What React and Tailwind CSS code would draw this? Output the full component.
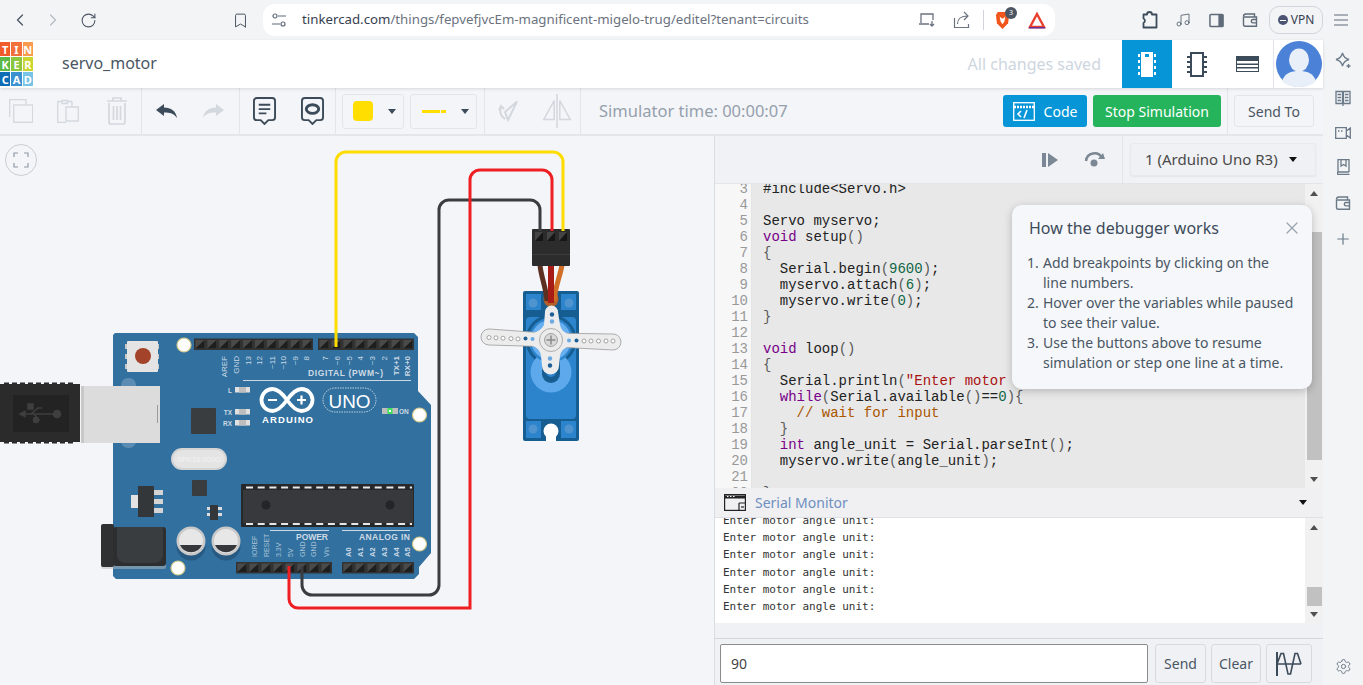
import React from "react";
import { ChevronLeft, ChevronRight, RotateCw, Bookmark, Music, Plus, Settings, X } from "lucide-react";

const sans = "font-['Noto_Sans',sans-serif]";

function Logo() {
  const cells = [
    ["T", "#f15a29"], ["I", "#f4703a"], ["N", "#f89b4f"],
    ["K", "#5cb947"], ["E", "#8dc63f"], ["R", "#cbd52f"],
    ["C", "#0f6db5"], ["A", "#3b90d0"], ["D", "#78c4e6"],
  ];
  return (
    <div className="w-[33px] h-[44px] grid grid-cols-3 gap-[1px] mt-[2px] shrink-0 overflow-hidden">
      {cells.map(([l, c], i) => (
        <div key={i} className="flex items-center justify-center text-white text-[11px] font-bold leading-none" style={{ background: c }}>{l}</div>
      ))}
    </div>
  );
}

function WalletIcon({ className, color = "#5f6b78" }) {
  return (
    <svg width="16" height="16" viewBox="0 0 16 16" fill="none" stroke={color} strokeWidth="1.4" className={className}>
      <path d="M1.500 4.500a2.500 2.500 0 012.500-2.500h8.500v3" />
      <path d="M1.500 4.500V12.500a1.800 1.800 0 001.800 1.800H14.500V5H2" />
      <path d="M14.500 7.500h-3.500a1.700 1.700 0 000 3.400h3.500" />
    </svg>
  );
}

function BrowserBar() {
  return (
    <div className={`h-10 bg-[#f3f4f6] flex items-center shrink-0 ${sans}`}>
      <div className="flex items-center w-[263px] shrink-0 pl-[10px]">
        <ChevronLeft size={20} strokeWidth={1.5} className="text-[#4b5563] shrink-0" />
        <ChevronRight size={20} strokeWidth={1.5} className="text-[#b6bcc5] ml-[13px] shrink-0" />
        <RotateCw size={17} strokeWidth={1.5} className="text-[#4b5563] ml-[17px] shrink-0" />
        <Bookmark size={17} strokeWidth={1.4} className="text-[#4b5563] ml-[135px] shrink-0" />
      </div>
      <div className="w-[792px] h-8 bg-white rounded-[12px] flex items-center pl-[9px] pr-[9px] shrink-0">
        <svg width="14" height="14" viewBox="0 0 14 14" fill="none" stroke="#5f6b78" strokeWidth="1.200" className="shrink-0"><circle cx="3" cy="3" r="2" /><path d="M6 3h8M0 11h8" /><circle cx="11" cy="11" r="2" /></svg>
        <span className="ml-[16px] pb-px text-[13.250px] leading-none text-[#6b7280] whitespace-nowrap"><span className="text-[#374151]">tinkercad.com</span>/things/fepvefjvcEm-magnificent-migelo-trug/editel?tenant=circuits</span>
        <div className="ml-auto flex items-center">
          <svg width="18" height="16" viewBox="0 0 18 16" fill="none" stroke="#6b7280" strokeWidth="1.300"><path d="M3 11V2h12v6M1 12h10M14 9v5M12 12l2 2 2-2" /></svg>
          <svg width="18" height="18" viewBox="0 0 18 18" fill="none" stroke="#6b7280" strokeWidth="1.200" className="ml-[17px]"><path d="M1.500 7v9.500h14V13M4.500 13c0-5 3.500-8 10-8M11 1l4 4-4 4" /></svg>
          <div className="w-px h-5 bg-[#d1d5db] ml-[12px]" />
          <div className="relative ml-[11px] w-[15px] h-[19px]">
            <svg width="15" height="19" viewBox="0 0 16 20"><path d="M3 1h10l2 3-1 9-6 6-6-6-1-9z" fill="#f1561d" /><path d="M5 6l3 2 3-2-1 5-2 3-2-3z" fill="#fff" /></svg>
            <span className="absolute -top-[4px] left-[10px] w-[12px] h-[12px] rounded-full bg-[#4b5563] text-white text-[7px] leading-[12px] text-center">3</span>
          </div>
          <svg width="18" height="17" viewBox="0 0 18 17" className="ml-[18px]"><path d="M9 2L16 15H2z" fill="none" stroke="#e8412f" strokeWidth="2.400" /><path d="M1 15h16v1.500H1z" fill="#662d91" /></svg>
        </div>
      </div>
      <div className="flex-1 flex items-center pl-[87px]">
        <svg width="16" height="18" viewBox="0 0 16 18" fill="none" stroke="#3c4b5a" strokeWidth="1.800" className="shrink-0"><path d="M1.500 3.500H5a2.500 2.500 0 015 0h4.500v13H1.500V12a2.500 2.500 0 000-4.500z" strokeLinejoin="round" /></svg>
        <Music size={16} strokeWidth={1.4} className="text-[#5f6b78] ml-[17px] shrink-0" />
        <svg width="15" height="15" viewBox="0 0 16 16" className="ml-[18px] shrink-0"><rect x="1" y="1.500" width="14" height="13" rx="1" fill="none" stroke="#5f6b78" strokeWidth="1.600" /><rect x="10" y="1.500" width="5" height="13" fill="#5f6b78" /></svg>
        <WalletIcon className="ml-[18px] shrink-0" />
        <div className="ml-[11px] w-[54px] h-[28px] rounded-[10px] border border-[#d1d5db] flex items-center justify-center gap-[3px] text-[12px] text-[#374151] shrink-0">
          <span className="w-[10px] h-[10px] rounded-full bg-[#4b5573] flex items-center justify-center"><span className="w-[6px] h-px bg-white" /></span>VPN
        </div>
        <svg width="14" height="12" viewBox="0 0 14 12" stroke="#5f6b78" strokeWidth="1.200" className="ml-[11px] shrink-0"><path d="M0 1h14M0 6h14M0 11h14" /></svg>
      </div>
    </div>
  );
}

function Header() {
  return (
    <div className={`h-12 bg-white flex items-stretch shrink-0 shadow-[0_1px_3px_rgba(0,0,0,0.12)] relative z-10 ${sans}`}>
      <Logo />
      <div className="ml-[29px] self-center pb-[2px] text-[16px] text-[#4a5663]">servo_motor</div>
      <div className="ml-auto self-center pb-[1px] text-[16px] text-[#ced6e0] mr-[21px] whitespace-nowrap">All changes saved</div>
      <div className="w-[50px] bg-[#0696d7] flex items-center justify-center shrink-0">
        <svg width="18" height="27" viewBox="0 0 18 27"><rect x="3" y="1" width="12" height="25" fill="#fff" /><rect x="7" y="3" width="4" height="3" fill="#0696d7" /><path d="M0 3h2v3H0zM0 9h2v3H0zM0 15h2v3H0zM0 21h2v3H0zM16 3h2v3h-2zM16 9h2v3h-2zM16 15h2v3h-2zM16 21h2v3h-2z" fill="#fff" /></svg>
      </div>
      <div className="w-[50px] flex items-center justify-center shrink-0">
        <svg width="20" height="25" viewBox="0 0 20 25" fill="none" stroke="#3c4b5a" strokeWidth="2"><rect x="4" y="1" width="12" height="23" /><path d="M0 5h4M0 10h4M0 15h4M0 20h4M16 5h4M16 10h4M16 15h4M16 20h4" /></svg>
      </div>
      <div className="w-[51px] flex items-center justify-center shrink-0">
        <svg width="23" height="16" viewBox="0 0 23 16"><rect width="23" height="16" fill="#3c4b5a" /><path d="M1 5h21v2.500H1zM1 9h21v2H1zM1 12.500h21V15H1z" fill="#fff" /></svg>
      </div>
      <div className="w-[50px] border-l border-[#e2e5e9] flex items-center justify-center shrink-0 overflow-hidden">
        <svg width="46" height="46" viewBox="0 0 46 46"><circle cx="23" cy="23" r="23" fill="#4b82d8" /><ellipse cx="23" cy="19" rx="10" ry="11.500" fill="#e9eff8" /><path d="M6 40c3-8 9-10 17-10s14 2 17 10c-4 4-10 6-17 6S10 44 6 40z" fill="#e9eff8" /></svg>
      </div>
    </div>
  );
}

const Divider = () => <div className="w-px self-stretch bg-[#e2e5e9] shrink-0" />;

function Toolbar() {
  const gray = "#d3d8de";
  return (
    <div className={`h-12 bg-[#f4f5f8] flex items-center shrink-0 border-b-2 border-[#e4e6ea] ${sans}`}>
      <div className="w-[141px] flex items-center pl-[9px] shrink-0">
        <svg width="24" height="24" viewBox="0 0 24 24" fill="none" stroke={gray} strokeWidth="1.300" className="shrink-0"><path d="M.7 18V.7H17V6" /><rect x="4.700" y="6" width="19" height="17.300" /></svg>
        <svg width="22" height="24" viewBox="0 0 22 24" fill="none" stroke={gray} strokeWidth="1.300" className="ml-[24px] shrink-0"><path d="M5 2.500H.7v21h8.300M15 2.500h-4.500M5 4.500V1.500h5.500v3zM15 2.500v5M9 8h12.300v14H9z" /></svg>
        <svg width="20" height="28" viewBox="0 0 20 28" fill="none" stroke={gray} strokeWidth="1.700" className="ml-[28px] shrink-0"><path d="M0 4h20M6 4V1h8v3M2 6v19a2 2 0 002 2h12a2 2 0 002-2V6M6.500 9v14M10 9v14M13.500 9v14" /></svg>
      </div>
      <Divider />
      <div className="w-[97px] flex items-center pl-[14px] shrink-0">
        <svg width="21" height="14" viewBox="0 0 21 14" className="shrink-0"><path d="M8 0L0 6l8 6V8.500c6 0 10 1 13 5.500C20 7 15 3.500 8 3.500z" fill="#3c4b5a" /></svg>
        <svg width="21" height="14" viewBox="0 0 21 14" className="ml-[26px] shrink-0"><path d="M13 0l8 6-8 6V8.500C7 8.500 3 9.500 0 14 1 7 6 3.500 13 3.500z" fill="#d3d8de" /></svg>
      </div>
      <Divider />
      <div className="w-[95px] flex items-center pl-[13px] shrink-0">
        <svg width="23" height="28" viewBox="0 0 24 29" fill="none" stroke="#3c4b5a" strokeWidth="2" className="shrink-0"><path d="M4 1h16a3 3 0 013 3v17a3 3 0 01-3 3h-4l-4 4-4-4H4a3 3 0 01-3-3V4a3 3 0 013-3z" /><path d="M6 8h12M6 12.500h12M6 17h8" /></svg>
        <svg width="23" height="28" viewBox="0 0 24 29" fill="none" stroke="#3c4b5a" strokeWidth="2" className="ml-[25px] shrink-0"><path d="M4 1h16a3 3 0 013 3v17a3 3 0 01-3 3h-4l-4 4-4-4H4a3 3 0 01-3-3V4a3 3 0 013-3z" /><ellipse cx="12" cy="12.500" rx="6.500" ry="4.500" strokeWidth="3" /></svg>
      </div>
      <Divider />
      <div className="w-[148px] flex items-center gap-[6px] pl-[6px] shrink-0">
        <div className="w-[62px] h-[35px] border border-[#e2e5e9] rounded-[3px] flex items-center pl-[10px] shrink-0">
          <div className="w-5 h-5 bg-[#ffde00] rounded-[4px]" />
          <div className="ml-[15px] w-0 h-0 border-x-[4px] border-x-transparent border-t-[5px] border-t-[#3c4b5a]" />
        </div>
        <div className="w-[67px] h-[35px] border border-[#e2e5e9] rounded-[3px] flex items-center pl-[11px] shrink-0">
          <div className="w-[18px] h-[3px] bg-[#ffde00]" />
          <div className="w-[5px] h-[3px] bg-[#ffde00] ml-px" />
          <div className="ml-[15px] w-0 h-0 border-x-[4px] border-x-transparent border-t-[5px] border-t-[#3c4b5a]" />
        </div>
      </div>
      <Divider />
      <div className="w-[95px] flex items-center pl-[13px] shrink-0">
        <svg width="20" height="22" viewBox="0 0 20 22" fill="none" stroke={gray} strokeWidth="2" className="shrink-0"><path d="M19 1.500L10 20 7 12zM3 7c-2 5 0 9 4 12" /><path d="M1 10l2-4 3 3" /></svg>
        <svg width="30" height="34" viewBox="0 0 30 36" fill="none" stroke={gray} strokeWidth="1.600" className="ml-[24px] shrink-0"><path d="M15 0v36M12 7L1 27h11zM18 7l11 20H18z" /></svg>
      </div>
      <Divider />
      <div className="ml-[18px] mt-[1px] text-[16.500px] text-[#94a0ad] whitespace-nowrap">Simulator time: 00:00:07</div>
      <div className="ml-auto flex items-center h-full shrink-0">
        <button className="w-[84px] h-8 bg-[#0696d7] rounded-[3px] flex items-center justify-center gap-[9px] text-white text-[14px]">
          <svg width="22" height="19" viewBox="0 0 22 19" fill="none" stroke="#fff" strokeWidth="1.300"><rect x=".7" y=".7" width="20.600" height="17.600" /><path d="M1 5h20" strokeWidth="2.500" strokeDasharray="2 1" /><path d="M8 9l-3 3 3 3M14 8l-3 8" strokeWidth="1.600" /></svg>
          Code
        </button>
        <button className="ml-[6px] w-[128px] h-8 bg-[#25b45b] rounded-[3px] text-white text-[14px] whitespace-nowrap">Stop Simulation</button>
        <div className="ml-[6px] w-px h-full bg-[#e2e5e9]" />
        <button className="ml-[6px] w-20 h-8 border border-[#e2e5e9] rounded-[3px] text-[#4a5663] text-[14px]">Send To</button>
        <div className="w-[9px]" />
      </div>
    </div>
  );
}

function Pins({ x, y, n, w }) {
  const step = w / n;
  return (
    <g>
      <rect x={x} y={y} width={w} height={11.500} fill="#333" />
      {Array.from({ length: n }).map((_, i) => (
        <g key={i}>
          <rect x={x + i * step + 1.500} y={y + 1.500} width={step - 3} height={8.500} fill="#4a4a4a" />
          <path d={`M${x + i * step + 1.500} ${y + 10}h${step - 3}v-8.500z`} fill="#1e1e1e" />
        </g>
      ))}
    </g>
  );
}

const Hole = ({ x, y }) => <circle cx={x} cy={y} r="7" fill="#fff" stroke="#d5c98a" strokeWidth="1.200" />;

const labelFont = "'Liberation Sans',sans-serif";
function Vert({ x, y, t, size = 8, fill = "#cddae5", anchor = "end", weight = "400" }) {
  return <text transform={`translate(${x} ${y}) rotate(-90)`} fontSize={size} fill={fill} fontFamily={labelFont} fontWeight={weight} textAnchor={anchor}>{t}</text>;
}

function Arduino() {
  const topL = [["AREF", 227], ["GND", 239], ["13", 251], ["12", 262], ["~11", 275], ["~10", 286], ["~9", 298], ["8", 309]];
  const topR = [["7", 328], ["~6", 340], ["~5", 352], ["4", 363], ["~3", 375], ["2", 387], ["TX+1", 399], ["RX+0", 410]];
  const pow = [["IOREF", 257], ["RESET", 269], ["3.3V", 281], ["5V", 293], ["GND", 305], ["GND", 316], ["Vin", 329]];
  const ana = [["A0", 351], ["A1", 363], ["A2", 375], ["A3", 387], ["A4", 399], ["A5", 410]];
  return (
    <g>
      <rect x="0" y="384" width="80" height="58" fill="#2b2b2b" />
      <path d="M4 383.500h70M4 442.500h70" stroke="#2b2b2b" strokeWidth="2" strokeDasharray="5 3" />
      <rect x="13" y="395" width="56" height="37" fill="#232323" />
      <g stroke="#3f3f3f" strokeWidth="1.500" fill="#3f3f3f">
        <path d="M22 414h35M31 414l7-6h4M34 414l5 6h-2" fill="none" />
        <circle cx="57" cy="414" r="3.500" /><rect x="28" y="404" width="5" height="5" /><circle cx="36" cy="420" r="2.500" /><path d="M20 414l5-2.500v5z" />
      </g>
      <path d="M115 333H414L418 337V391L431 405V553L419 567V574L414 579H116L113 576V335z" fill="#31709f" />
      <rect x="121" y="378" width="15" height="70" rx="7" fill="#5b8db4" />
      <rect x="81" y="386" width="79" height="57" fill="#dcdcdc" />
      <rect x="81" y="386" width="3" height="57" fill="#c8c8c8" />
      <rect x="157" y="405" width="1" height="18" fill="#9a9a9a" />
      <rect x="125" y="344" width="34" height="5" fill="#c9c9c9" /><rect x="125" y="354" width="34" height="5" fill="#c9c9c9" /><rect x="125" y="364" width="34" height="5" fill="#c9c9c9" />
      <rect x="127" y="341" width="31" height="31" rx="1" fill="#e4e4e4" />
      <circle cx="143" cy="356" r="8" fill="#a3432a" />
      <Pins x={194} y={338.500} n={10} w={119} />
      <Pins x={318} y={338.500} n={8} w={96} />
      <Pins x={236} y={562} n={8} w={96} />
      <Pins x={342} y={562} n={6} w={72} />
      <Hole x={184} y={345} /><Hole x={419.500} y={415} /><Hole x={419.500} y={544} /><Hole x={178} y={568} />
      {topL.map(([t, x]) => <Vert key={t} x={x} y={t === "AREF" || t === "GND" ? 356 : 356} t={t} />)}
      {topR.map(([t, x]) => <Vert key={t} x={x} y={356} t={t} weight={t.length > 3 ? "700" : "400"} />)}
      <text x="308" y="376" fontSize="8.500" fontWeight="700" textLength="75" fill="#cddae5" fontFamily={labelFont}>DIGITAL (PWM~)</text>
      <rect x="243" y="380" width="168" height="1" fill="#cddae5" />
      {pow.map(([t, x], i) => <Vert key={t + i} x={x} y={557} t={t} anchor="start" size={7} fill="#a9c2d6" />)}
      {ana.map(([t, x]) => <Vert key={t} x={x} y={557} t={t} anchor="start" size={7.500} weight="700" />)}
      <rect x="270" y="530" width="59" height="1" fill="#cddae5" /><rect x="342" y="530" width="68" height="1" fill="#cddae5" />
      <text x="296" y="540" fontSize="8.500" fontWeight="700" textLength="32" fill="#cddae5" fontFamily={labelFont}>POWER</text>
      <text x="359" y="540" fontSize="8.500" fontWeight="700" textLength="51" fill="#cddae5" fontFamily={labelFont}>ANALOG IN</text>
      {[[387, "L"], [409, "TX"], [420, "RX"]].map(([y, t]) => (
        <g key={t}><rect x="235" y={y} width="15" height="5.500" fill="#e0e0e0" /><rect x="239" y={y} width="7" height="5.500" fill="#bdbdbd" /><text x="232" y={y + 5.500} textAnchor="end" fontSize="6.500" fontWeight="700" fill="#cddae5" fontFamily={labelFont}>{t}</text></g>
      ))}
      <rect x="191" y="408" width="25" height="26" rx="1" fill="#3a3d40" />
      <path d="M287 400C282 393 278 389 272.500 389a11 11 0 000 22C278 411 282 407 287 400C292 393 296 389 301.500 389a11 11 0 010 22C296 411 292 407 287 400z" fill="none" stroke="#fff" strokeWidth="3.800" />
      <path d="M268 400h9M297 400h9M301.500 395.500v9" stroke="#fff" strokeWidth="2.200" />
      <text x="262" y="423" fontSize="9.500" fontWeight="700" textLength="51" fill="#fff" fontFamily={labelFont}>ARDUINO</text>
      <rect x="323" y="388" width="53" height="24" rx="12" fill="none" stroke="#e5edf3" strokeWidth=".8" strokeDasharray="1.500 1" />
      <text x="349.500" y="408" textAnchor="middle" fontSize="19" fill="#fff" fontFamily={labelFont} textLength="42" lengthAdjust="spacingAndGlyphs">UNO</text>
      <rect x="382" y="408" width="16" height="6" fill="#bdbdbd" /><rect x="387.500" y="408" width="5" height="6" fill="#3fe05a" /><rect x="389" y="410" width="2" height="2" fill="#fff" />
      <text x="399" y="414" fontSize="6.500" fontWeight="700" fill="#cddae5" fontFamily={labelFont}>ON</text>
      <rect x="171" y="448" width="56" height="22" rx="11" fill="#d4d4d4" />
      <rect x="173" y="450" width="52" height="18" rx="9" fill="#e4e4e4" />
      <text x="199" y="462" textAnchor="middle" fontSize="7.500" fill="#f3f3f3" fontFamily={labelFont}>SPK16.000G</text>
      <rect x="192" y="480" width="15" height="16" rx="1" fill="#3a3d40" />
      <rect x="131" y="495" width="8" height="13" fill="#e3e3e3" /><rect x="154" y="490" width="9" height="5" fill="#d4d4d4" /><rect x="154" y="499" width="9" height="5" fill="#d4d4d4" /><rect x="154" y="508" width="9" height="5" fill="#d4d4d4" />
      <rect x="138" y="486" width="16" height="31" fill="#34373a" />
      <rect x="207" y="507" width="15" height="3" fill="#ddd" /><rect x="207" y="513" width="15" height="3" fill="#ddd" />
      <rect x="210" y="505" width="8" height="15" fill="#34373a" />
      <rect x="241" y="484" width="173" height="43" rx="1" fill="#26282a" />
      <rect x="243" y="490" width="170" height="33" fill="#37393c" />
      <path d="M246 487.500H412M246 524H412" stroke="#e8e8e8" strokeWidth="2.200" strokeDasharray="7 4.700" />
      <circle cx="266" cy="505" r="4.500" fill="#232527" /><circle cx="390" cy="505" r="4.500" fill="#232527" />
      {[191, 226].map((x) => (
        <g key={x}>
          <circle cx={x} cy="546" r="14.500" fill="#275a82" />
          <circle cx={x} cy="541" r="14.500" fill="#c9c9c9" />
          <circle cx={x} cy="541" r="12" fill="#e7e7e7" />
          <path d={`M${x - 11} 545a12 12 0 0022 0z`} fill="#35383b" />
        </g>
      ))}
      <rect x="101" y="528" width="65" height="41" rx="2" fill="#bcbcbc" opacity=".5" />
      <rect x="101" y="524" width="13" height="43" rx="2" fill="#2f3133" />
      <rect x="113" y="527" width="53" height="39" rx="3" fill="#2c2e30" />
      <path d="M117 527h46v28a8 8 0 01-8 8h-30a8 8 0 01-8-8z" fill="#3a3d40" />
    </g>
  );
}

function Servo() {
  return (
    <g>
      <rect x="523" y="291" width="56" height="150" rx="2" fill="#165d92" />
      <rect x="526" y="317" width="50" height="102" rx="4" fill="#2b84cc" />
      <rect x="526" y="294" width="15" height="16" fill="#2b84cc" /><rect x="561" y="294" width="15" height="16" fill="#2b84cc" />
      <rect x="526" y="421" width="15" height="17" fill="#2b84cc" /><rect x="561" y="421" width="15" height="17" fill="#2b84cc" />
      <circle cx="533" cy="303" r="4.500" fill="#4f94cf" /><circle cx="569" cy="303" r="4.500" fill="#4f94cf" />
      <circle cx="533" cy="429" r="4.500" fill="#4f94cf" /><circle cx="569" cy="429" r="4.500" fill="#4f94cf" />
      <circle cx="551" cy="340" r="25.500" fill="#165d92" />
      <circle cx="551" cy="372" r="20.500" fill="#5ea8ec" />
      <circle cx="551" cy="340" r="22.500" fill="#2b84cc" /><circle cx="551" cy="340" r="20" fill="#6ab0f0" />
      <rect x="542" y="353" width="18" height="30" rx="9" fill="#165d92" />
      <rect x="546" y="366" width="10" height="11" rx="5" fill="#2b84cc" />
      <path d="M546 441v-6h10v6z" fill="#fff" />
      <circle cx="551" cy="431" r="7.500" fill="#fff" />
      <ellipse cx="551" cy="299" rx="7.500" ry="8" fill="#b4602a" />
      <path d="M540 265c1 12 6 22 7 36" stroke="#5c3020" strokeWidth="5" fill="none" />
      <path d="M562 265c-2 12-7 22-8 36" stroke="#d06f25" strokeWidth="5" fill="none" />
      <path d="M551 265v38" stroke="#a81c16" strokeWidth="6" fill="none" />
      <rect x="532" y="229" width="38" height="37" rx="1" fill="#2c2c2c" />
      <rect x="532" y="254" width="38" height="1" fill="#3c3c3c" />
      {[535, 547, 559].map((x) => <g key={x}><rect x={x} y="232" width="8" height="9" fill="#444" /><path d={`M${x} 241h8v-9z`} fill="#161616" /></g>)}
      <path d="M489 329L545 333 613 334a8 8 0 010 16L557 347 489 345a8 8 0 010-16z" fill="#ececec" stroke="#9a9a9a" strokeWidth=".8" />
      <path d="M545 312a6.500 6.500 0 0113 0L560 325Q561 332 570 334.500L570 346Q561 348.500 560 356L559 366a8.500 8.500 0 01-17 0L541 356Q540 348.500 532 345.500L532 333.500Q541 331 544 325z" fill="#ececec" />
      {[489, 496, 503, 511, 518].map((x) => <circle key={x} cx={x} cy={337.500 + (x - 489) * 0.05} r="2" fill="#fff" stroke="#8f8f8f" strokeWidth=".8" />)}
      <circle cx="525.500" cy="338.500" r="2" fill="#1c5f96" /><circle cx="532.500" cy="339" r="2" fill="#6aa9e2" />
      <circle cx="569" cy="340.500" r="2" fill="#6aa9e2" /><circle cx="576.500" cy="340.500" r="2" fill="#1c5f96" />
      {[584, 591, 598.500, 606, 613].map((x) => <circle key={x} cx={x} cy="341" r="2" fill="#fff" stroke="#8f8f8f" strokeWidth=".8" />)}
      <circle cx="552" cy="314.500" r="2.200" fill="#1c5f96" /><circle cx="552" cy="321.500" r="2.200" fill="#6aa9e2" />
      <circle cx="550" cy="358.500" r="2.200" fill="#6aa9e2" /><circle cx="550" cy="365.500" r="2.200" fill="#1c5f96" />
      <circle cx="551" cy="340" r="11.500" fill="#ececec" stroke="#9a9a9a" strokeWidth=".8" />
      <circle cx="551" cy="340" r="6.500" fill="#d8d8d8" stroke="#8f8f8f" strokeWidth=".8" />
      <path d="M551 335.500v9M546.500 340h9" stroke="#8a8a8a" strokeWidth="1.500" />
    </g>
  );
}

function Canvas() {
  return (
    <div className="w-[714px] shrink-0 bg-[#f4f5f8] relative overflow-hidden">
      <svg width="714" height="549" viewBox="0 136 714 549" className="block">
        <Arduino />
        <Servo />
        <path d="M336 347V162a10 10 0 0110-10H553a10 10 0 0110 10V231" fill="none" stroke="#fddc00" strokeWidth="3" />
        <path d="M302 566V585a10 10 0 0010 10H429a10 10 0 0010-10V210a10 10 0 0110-10H530a10 10 0 0110 10V231" fill="none" stroke="#3a3c40" strokeWidth="3" />
        <path d="M289 566V599a9 9 0 009 9H470V180a10 10 0 0110-10H542a10 10 0 0110 10V231" fill="none" stroke="#ee1e23" strokeWidth="3" />
      </svg>
      <div className="absolute left-[5px] top-[8px] w-8 h-8 rounded-full border border-[#c9ced5] flex items-center justify-center">
        <svg width="16" height="16" viewBox="0 0 16 16" fill="none" stroke="#8e99a5" strokeWidth="1.200"><path d="M1 5V1h4M11 1h4v4M15 11v4h-4M5 15H1v-4" /></svg>
      </div>
    </div>
  );
}

const P = ({ children }) => <span className="text-[#5a5a5a]">{children}</span>;
const K = ({ children }) => <span className="text-[#770088]">{children}</span>;
const N = ({ children }) => <span className="text-[#116644]">{children}</span>;

const codeLines = [
  [3, <>#include&lt;Servo.h&gt;</>],
  [4, ""],
  [5, "Servo myservo;"],
  [6, <><K>void</K> setup<P>()</P></>],
  [7, <P>{"{"}</P>],
  [8, <>  Serial.begin<P>(</P><N>9600</N><P>)</P>;</>],
  [9, <>  myservo.attach<P>(</P><N>6</N><P>)</P>;</>],
  [10, <>  myservo.write<P>(</P><N>0</N><P>)</P>;</>],
  [11, <P>{"}"}</P>],
  [12, ""],
  [13, <><K>void</K> loop<P>()</P></>],
  [14, <P>{"{"}</P>],
  [15, <>  Serial.println<P>(</P><span className="text-[#aa1111]">"Enter motor angle unit:"</span><P>)</P>;</>],
  [16, <>  <K>while</K><P>(</P>Serial.available<P>()</P>==<N>0</N><P>){"{"}</P></>],
  [17, <span className="text-[#aa5500]">    // wait for input</span>],
  [18, <>  <P>{"}"}</P></>],
  [19, <>  <K>int</K> angle_unit = Serial.parseInt<P>()</P>;</>],
  [20, <>  myservo.write<P>(</P>angle_unit<P>)</P>;</>],
  [21, ""],
  [22, <P>{"}"}</P>],
];

function Scrollbar({ thumbTop, thumbH }) {
  return (
    <div className="w-[18px] shrink-0 bg-[#f1f1f1] relative">
      <div className="absolute top-[7px] left-[5px] w-0 h-0 border-x-[4px] border-x-transparent border-b-[5px] border-b-[#505050]" />
      <div className="absolute bg-[#c1c1c1] left-[2px] right-[1px]" style={{ top: thumbTop, height: thumbH }} />
      <div className="absolute bottom-[6px] left-[5px] w-0 h-0 border-x-[4px] border-x-transparent border-t-[5px] border-t-[#505050]" />
    </div>
  );
}

function Panel() {
  return (
    <div className={`flex-1 min-w-0 flex flex-col border-l border-[#d9dce1] relative ${sans}`}>
      <div className="h-12 bg-[#f1f2f5] flex items-center shrink-0 border-b border-[#e2e5e9]">
        <svg width="16" height="14" viewBox="0 0 16 14" className="ml-[327px] shrink-0"><rect width="4" height="14" fill="#7b8794" /><path d="M6 0l10 7-10 7z" fill="#7b8794" /></svg>
        <svg width="21" height="15" viewBox="0 0 21 15" className="ml-[26px] shrink-0" fill="none"><path d="M2 9a8.500 8.500 0 0116-3" stroke="#7b8794" strokeWidth="2.500" /><path d="M14 7l7 0 -2-6z" fill="#7b8794" /><circle cx="10" cy="11" r="3.500" fill="#7b8794" /></svg>
        <div className="ml-[17px] w-px h-full bg-[#e2e5e9]" />
        <div className="ml-[7px] w-[186px] h-[33px] bg-[#f0f1f4] border border-[#e7e9ed] rounded-[3px] flex items-center pl-[14px] text-[15px] text-[#4a4a4a] shadow-[0_1px_2px_rgba(0,0,0,0.06)] whitespace-nowrap shrink-0">
          1 (Arduino Uno R3)
          <div className="ml-[11px] w-0 h-0 border-x-[4px] border-x-transparent border-t-[5px] border-t-[#111]" />
        </div>
      </div>
      <div className="h-[304px] flex shrink-0 overflow-hidden">
        <div className="flex-1 min-w-0 bg-[#e8e8e8] overflow-hidden">
          <div className="-mt-[3px] font-['Liberation_Mono',monospace] text-[14px] leading-[16px] text-[#222]">
            {codeLines.map(([n, c]) => (
              <div key={n} className="flex h-4">
                <div className="w-[37px] shrink-0 bg-[#f7f7f7] border-r border-[#e4e4e4] text-right pr-[3px] text-[#999]">{n}</div>
                <div className="pl-[11px] whitespace-pre">{c}</div>
              </div>
            ))}
          </div>
        </div>
        <Scrollbar thumbTop={48} thumbH={228} />
      </div>
      <div className="h-[30px] bg-[#f0f0f3] flex items-center shrink-0 border-b border-[#dfe1e6] pl-[9px]">
        <svg width="22" height="17" viewBox="0 0 22 17" fill="none" stroke="#222" strokeWidth="1.200"><rect x=".6" y=".6" width="20.800" height="15.800" /><path d="M1 3h20" strokeWidth="3" /><path d="M3 2.500h1.500M6 2.500h1.500M9 2.500h1.500" stroke="#fff" /><path d="M15 9h6M15 9v7" /><path d="M17 13h3" /></svg>
        <span className="ml-[9px] text-[14px] text-[#6f8fbf]">Serial Monitor</span>
        <div className="ml-auto mr-[16px] w-0 h-0 border-x-[4px] border-x-transparent border-t-[5px] border-t-[#111]" />
      </div>
      <div className="h-[105px] flex shrink-0 overflow-hidden">
        <div className="flex-1 min-w-0 bg-white overflow-hidden pl-2 font-['DejaVu_Sans_Mono',monospace] text-[11px] leading-[17.200px] text-[#333]">
          <div className="-mt-[6px]">
            {Array.from({ length: 6 }).map((_, i) => <div key={i}>Enter motor angle unit:</div>)}
          </div>
        </div>
        <Scrollbar thumbTop={69} thumbH={19} />
      </div>
      <div className="h-4 bg-[#f0f1f4] shrink-0 border-b border-[#d3d6dc]" />
      <div className="flex-1 bg-[#f0f1f4] flex items-start pt-[5px] pl-[5px]">
        <div className="w-[428px] h-[39px] bg-white border border-[#8c8c8c] rounded-[2px] flex items-center pl-[10px] text-[14px] text-[#444]">90</div>
        <button className="ml-[7px] w-[51px] h-[39px] border border-[#d7dbe1] rounded-[3px] text-[14px] text-[#4a5663]">Send</button>
        <button className="ml-[5px] w-[50px] h-[39px] border border-[#d7dbe1] rounded-[3px] text-[14px] text-[#4a5663]">Clear</button>
        <button className="ml-[5px] w-[46px] h-[39px] border border-[#d7dbe1] rounded-[3px] flex items-center justify-center">
          <svg width="26" height="24" viewBox="0 0 26 24" fill="none" stroke="#3c4b5a" strokeWidth="1.600"><path d="M1 0v24" strokeWidth="2" /><path d="M1 12h24M1 12L5 1.500h2.500L12 22h2.500L19 1.500h2.500L25 12" /></svg>
        </button>
      </div>
      <div className="absolute left-[297px] top-[69px] w-[300px] h-[184px] bg-[#f5f7fa] rounded-[10px] shadow-[0_2px_8px_rgba(0,0,0,0.22)] pl-[17px] pr-[12px] pt-[12px]">
        <div className="flex items-center justify-between h-[22px]">
          <span className="text-[16px] text-[#3c4b5a] whitespace-nowrap">How the debugger works</span>
          <X size={20} strokeWidth={1.500} className="text-[#9aa3ae] -mr-[2px]" />
        </div>
        <ol className="mt-[14px] text-[14px] leading-[20px] text-[#4a5663]">
          {[["1.", "Add breakpoints by clicking on the", "line numbers."], ["2.", "Hover over the variables while paused", "to see their value."], ["3.", "Use the buttons above to resume", "simulation or step one line at a time."]].map(([n, a, b]) => (
            <li key={n} className="flex -ml-[2px]">
              <span className="w-4 shrink-0">{n}</span>
              <span className="whitespace-nowrap">{a}<br />{b}</span>
            </li>
          ))}
        </ol>
      </div>
    </div>
  );
}

function Sidebar() {
  const c = "#6b7a88";
  return (
    <div className="w-10 shrink-0 bg-[#f3f4f6] flex flex-col items-center pt-[12px]">
      <svg width="17" height="17" viewBox="0 0 17 17" fill="none" stroke={c} strokeWidth="1.300"><path d="M7.500 1c1 4 2.500 5.500 6.500 6.500-4 1-5.500 2.500-6.500 6.500-1-4-2.500-5.500-6.500-6.500C5 6.500 6.500 5 7.500 1z" /><path d="M13.500 12v4M11.500 14h4" /></svg>
      <svg width="16" height="16" viewBox="0 0 16 16" fill="none" stroke={c} strokeWidth="1.300" className="mt-[21px]"><path d="M1 1.500h6.500v12H1zM8.500 1.500H15v12H8.500zM8 13.500V16" /><path d="M2.500 4.500h3.500M2.500 7.500h3.500M2.500 10.500h3.500M10 4.500h3.500M10 7.500h3.500M10 10.500h3.500" /></svg>
      <svg width="16" height="12" viewBox="0 0 16 12" fill="none" stroke={c} strokeWidth="1.300" className="mt-[21px]"><path d="M.7.7h10.600v10.600H.7zM11.300 4L15.300 1v10l-4-3" /><path d="M3 4h1.500M6 4h1.500" /></svg>
      <svg width="13" height="16" viewBox="0 0 13 16" fill="none" stroke={c} strokeWidth="1.300" className="mt-[20px]"><path d="M1 13V.7h11v12.300M1 13a1.500 1.500 0 000 2.500h11.500M1 13h11" /><path d="M4 1v6l2.500-1.500L9 7V1" /></svg>
      <WalletIcon color={c} className="mt-[20px]" />
      <Plus size={18} strokeWidth={1.600} className="text-[#6b7a88] mt-[19px]" />
      <Settings size={17} strokeWidth={1.400} className="text-[#6b7a88] mt-auto mb-[10px]" />
    </div>
  );
}

export default function App() {
  return (
    <div className="w-[1363px] h-[685px] flex flex-col overflow-hidden bg-[#f3f4f6]">
      <BrowserBar />
      <div className="flex-1 flex min-h-0">
        <div className="flex-1 min-w-0 flex flex-col">
          <Header />
          <Toolbar />
          <div className="flex-1 flex min-h-0">
            <Canvas />
            <Panel />
          </div>
        </div>
        <Sidebar />
      </div>
    </div>
  );
}
